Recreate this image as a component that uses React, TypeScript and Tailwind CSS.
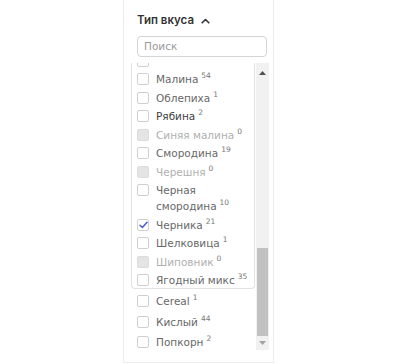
type Item = { name: string; count: number; disabled?: boolean; checked?: boolean; dark?: boolean; lines?: string[] };

const boxed: Item[] = [
  { name: "Малина", count: 54 },
  { name: "Облепиха", count: 1 },
  { name: "Рябина", count: 2, dark: true },
  { name: "Синяя малина", count: 0, disabled: true },
  { name: "Смородина", count: 19 },
  { name: "Черешня", count: 0, disabled: true },
  { name: "Черная смородина", count: 10, lines: ["Черная", "смородина"] },
  { name: "Черника", count: 21, checked: true },
  { name: "Шелковица", count: 1 },
  { name: "Шиповник", count: 0, disabled: true },
  { name: "Ягодный микс", count: 35 },
];

const rest: Item[] = [
  { name: "Cereal", count: 1 },
  { name: "Кислый", count: 44 },
  { name: "Попкорн", count: 2 },
];

function Box({ item }: { item: Item }) {
  if (item.disabled) {
    return <span className="mt-[2px] h-[12px] w-[12px] shrink-0 rounded-[2px] border border-[#dcdcdc] bg-[#e4e4e4]" />;
  }
  return (
    <span className="mt-[2px] flex h-[12px] w-[12px] shrink-0 items-center justify-center rounded-[2px] border border-[#cfcfcf] bg-white">
      {item.checked && (
        <svg width="9" height="8" viewBox="0 0 9 8" fill="none">
          <path d="M1 4.2 3.4 6.5 8 1.2" stroke="#4a5fd6" strokeWidth="1.5" strokeLinecap="round" strokeLinejoin="round" />
        </svg>
      )}
    </span>
  );
}

function Row({ item }: { item: Item }) {
  const color = item.disabled ? "text-[#b0b0b0]" : item.dark ? "text-[#3f3f3f]" : "text-[#686868]";
  const lines = item.lines ?? [item.name];
  return (
    <div className="flex items-start gap-[7px] py-[1.25px]">
      <Box item={item} />
      <div className={`text-[10.5px] leading-[16px] ${color}`}>
        {lines.map((l, i) => (
          <div key={i} className="h-[16px] whitespace-nowrap">
            {l}
            {i === lines.length - 1 && (
              <span className="relative -top-[5px] ml-[3px] text-[7.5px] leading-none text-[#777]">{item.count}</span>
            )}
          </div>
        ))}
      </div>
    </div>
  );
}

export default function App() {
  return (
    <div className="h-[364px] w-[404px] bg-white font-['DejaVu_Sans',sans-serif]">
      <div className="ml-[123px] flex h-[363px] w-[151px] flex-col border-x border-b border-[#ececec]">
        <div className="ml-[13px] mt-[13px] flex h-[16px] items-center gap-[7px] font-['Inter',sans-serif] text-[11.5px] font-semibold text-[#333]">
          Тип вкуса
          <svg width="9" height="6" viewBox="0 0 9 6" fill="none">
            <path d="M1.2 4.8 4.5 1.5 7.8 4.8" stroke="#333" strokeWidth="1.6" strokeLinecap="round" strokeLinejoin="round" />
          </svg>
        </div>
        <div className="ml-[13px] mt-[7px] flex h-[21px] w-[130px] items-center rounded-[4px] border border-[#d4d4d4] px-[6px] text-[10.5px] text-[#9a9a9a]">
          Поиск
        </div>
        <div className="mt-[6px] flex h-[287px] overflow-hidden">
          <div className="flex-1 overflow-hidden">
            <div className="ml-[7px] mr-[1px] h-[226px] overflow-hidden rounded-b-[4px] border-x border-b border-[#e2e2e2] pl-[5px]">
              <div className="-mt-[11.75px] flex h-[18.5px] items-start pt-[3.25px]">
                <span className="h-[12px] w-[12px] rounded-[2px] border border-[#cfcfcf]" />
              </div>
              {boxed.map((it) => (
                <Row key={it.name} item={it} />
              ))}
            </div>
            <div className="mt-[2px] pl-[13px]">
              {rest.map((it) => (
                <div key={it.name} className="py-[1px]">
                  <Row item={it} />
                </div>
              ))}
            </div>
          </div>
          <div className="flex w-[13px] flex-col bg-[#f1f1f1]">
            <div className="flex h-[20px] items-center justify-center">
              <svg width="7" height="4" viewBox="0 0 7 4"><path d="M3.5 0 7 4H0z" fill="#505050" /></svg>
            </div>
            <div className="h-[165px]" />
            <div className="mx-[1px] h-[88px] bg-[#c1c1c1]" />
            <div className="flex h-[14px] items-center justify-center">
              <svg width="7" height="4" viewBox="0 0 7 4"><path d="M0 0h7L3.5 4z" fill="#a3a3a3" /></svg>
            </div>
          </div>
          <div className="w-[4px]" />
        </div>
      </div>
    </div>
  );
}
